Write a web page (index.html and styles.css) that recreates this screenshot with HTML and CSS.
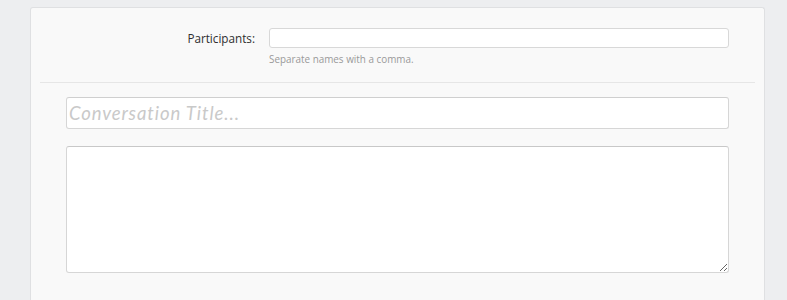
FILE: index.html
```html
<!DOCTYPE html>
<html>
<head>
<meta charset="utf-8">
<link rel="stylesheet" href="styles.css">
</head>
<body>
<div class="card">
  <div class="ctrl-row">
    <label class="ctrl-label" for="participants">Participants:</label>
    <div class="ctrl-input">
      <input id="participants" class="text-input" type="text">
      <p class="hint">Separate names with a comma.</p>
    </div>
  </div>
  <hr class="divider">
  <div class="compose">
    <input class="title-input" type="text" placeholder="Conversation Title...">
    <textarea class="message"></textarea>
  </div>
</div>
</body>
</html>
```
FILE: styles.css
```css
html, body {
  margin: 0;
  padding: 0;
  height: 100%;
}
body {
  background: #edeef0;
  font-family: "Open Sans", "DejaVu Sans", sans-serif;
  overflow: hidden;
}
.card {
  box-sizing: border-box;
  margin: 7px 0 0 30px;
  width: 735px;
  height: 293px;
  background: #f9f9f9;
  border: 1px solid #dfe0e2;
  border-bottom: none;
  border-radius: 3px 3px 0 0;
}
.ctrl-row {
  display: flex;
  padding-top: 20px;
}
.ctrl-label {
  width: 224px;
  text-align: right;
  font-size: 11.7px;
  color: #2f2f2f;
  padding-top: 2px;
  line-height: 16px;
}
.ctrl-input {
  margin-left: 14px;
}
.text-input {
  display: block;
  box-sizing: border-box;
  width: 460px;
  height: 20px;
  margin: 0;
  background: #fff;
  border: 1px solid #d8d8d8;
  border-radius: 3px;
  outline: none;
}
.hint {
  margin: 4px 0 0;
  font-size: 9.9px;
  line-height: 14px;
  color: #9a9a9a;
}
.divider {
  margin: 16px 9px 0;
  border: none;
  border-top: 1px solid #e6e6e6;
  height: 0;
}
.compose {
  display: flex;
  flex-direction: column;
  padding: 14px 0 0 35px;
}
.title-input {
  box-sizing: border-box;
  width: 663px;
  height: 32px;
  margin: 0;
  padding: 0 2px;
  background: #fff;
  border: 1px solid #d6d6d6;
  border-top-color: #cfcfcf;
  border-radius: 3px;
  font-family: Lato, "Open Sans", sans-serif;
  font-style: italic;
  font-size: 18.5px;
  letter-spacing: 0.9px;
  color: #333;
  outline: none;
}
.title-input::placeholder {
  color: #c9c9c9;
}
.message {
  box-sizing: border-box;
  width: 663px;
  height: 127px;
  margin: 17px 0 0;
  background: #fff;
  border: 1px solid #d6d6d6;
  border-top-color: #c8c8c8;
  border-radius: 3px;
  resize: vertical;
  outline: none;
}
```
